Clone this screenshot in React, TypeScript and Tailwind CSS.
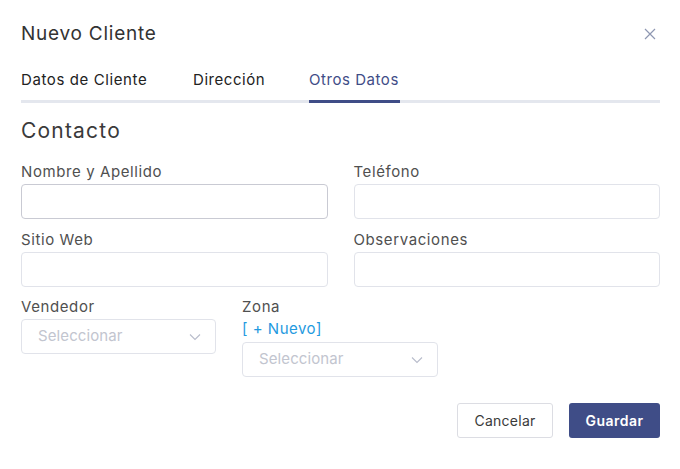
import React from "react";

const Chevron = () => (
  <svg width="12" height="8" viewBox="0 0 12 8" fill="none" className="shrink-0">
    <path d="M1 1.5L6 6.5L11 1.5" stroke="#b8bccb" strokeWidth="1.1" />
  </svg>
);

const Select = () => (
  <div className="h-[35px] w-full rounded-[4px] border border-[#e1e3ea] bg-white flex items-center justify-between pl-[16px] pr-[14px]">
    <span className="text-[15px] tracking-[0.1px] text-[#c2c5cf]">Seleccionar</span>
    <Chevron />
  </div>
);

const Label = ({ children, className = "" }: { children: React.ReactNode; className?: string }) => (
  <label className={"text-[15px] tracking-[0.6px] text-[#505050] leading-[20px] " + className}>{children}</label>
);

const Field = ({ label, dark }: { label: string; dark?: boolean }) => (
  <div className="flex flex-col">
    <Label className="mb-[2px]">{label}</Label>
    <div
      className={
        "h-[35px] w-full rounded-[4px] border bg-white " +
        (dark ? "border-[#c9cad3]" : "border-[#e1e3ea]")
      }
    />
  </div>
);

export default function App() {
  return (
    <div
      className="w-[680px] h-[469px] bg-white relative"
      style={{ fontFamily: "Inter, 'Open Sans', sans-serif" }}
    >
      <div className="pl-[21px] pr-[20px] pt-[22px]">
        <div className="flex items-center justify-between h-[24px]">
          <h1 className="text-[19px] tracking-[0.75px] text-[#333] leading-[24px]">Nuevo Cliente</h1>
          <svg width="12" height="12" viewBox="0 0 12 12" className="mr-[4px]">
            <path d="M1 1L11 11M11 1L1 11" stroke="#8e97b2" strokeWidth="1.2" />
          </svg>
        </div>
        <div className="mt-[23px] flex border-b-[3px] border-[#e4e7ee] h-[34px]">
          <div className="text-[15px] tracking-[0.6px] text-[#222] w-[172px] leading-[22px]">Datos de Cliente</div>
          <div className="text-[15px] tracking-[0.55px] text-[#222] w-[116px] leading-[22px]">Dirección</div>
          <div className="text-[15px] tracking-[0.55px] text-[#3f4d87] w-[91px] leading-[22px] relative">
            Otros Datos
            <div className="absolute left-0 right-0 bottom-[-3px] h-[3px] bg-[#3f4d87]" />
          </div>
        </div>
        <h2 className="mt-[15px] text-[21px] tracking-[1.2px] text-[#3a3a3a] leading-[26px]">Contacto</h2>
        <div className="mt-[18px] grid grid-cols-2 gap-x-[26px] gap-y-[11px]">
          <Field label="Nombre y Apellido" dark />
          <Field label="Teléfono" />
          <Field label="Sitio Web" />
          <Field label="Observaciones" />
        </div>
        <div className="mt-[10px] grid grid-cols-[195px_196px] gap-x-[26px]">
          <div className="flex flex-col">
            <Label className="mb-[2px]">Vendedor</Label>
            <Select />
          </div>
          <div className="flex flex-col">
            <Label className="mb-[2px]">Zona</Label>
            <span className="text-[15px] tracking-[0.5px] text-[#1f9ae0] leading-[20px] mb-[3px]">[ + Nuevo]</span>
            <Select />
          </div>
        </div>
        <div className="mt-[26px] flex justify-end gap-[16px]">
          <button className="h-[35px] w-[96px] rounded-[3px] border border-[#dcdde3] bg-white text-[14px] tracking-[0.25px] text-[#3a3a3a]">
            Cancelar
          </button>
          <button className="h-[35px] w-[91px] rounded-[3px] bg-[#3f4d87] text-[14px] tracking-[0.5px] font-semibold text-white">
            Guardar
          </button>
        </div>
      </div>
    </div>
  );
}
